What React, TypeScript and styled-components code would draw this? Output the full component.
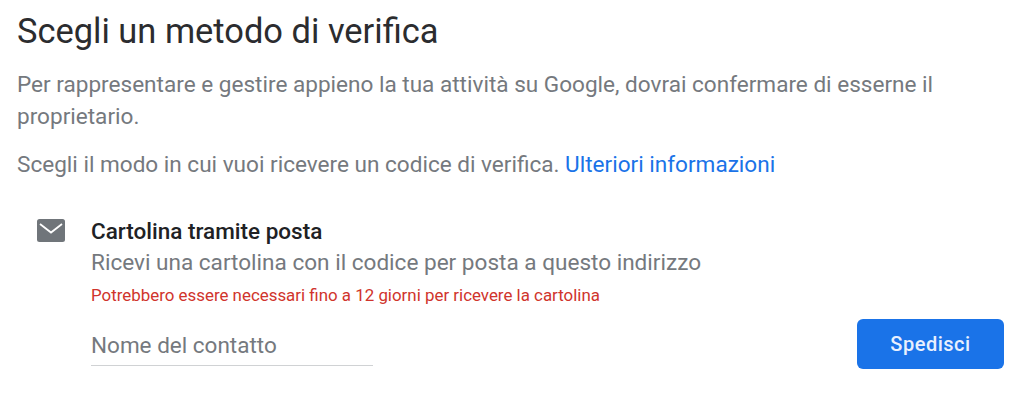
import React from 'react';
import styled, { createGlobalStyle } from 'styled-components';

const GlobalStyle = createGlobalStyle`
    html, body {
        margin: 0;
        background: #fff;
    }
`;

const Page = styled.div`
    width: 1024px;
    height: 410px;
    box-sizing: border-box;
    padding: 10px 20px 0 17px;
    font-family: Roboto, "Liberation Sans", sans-serif;
    overflow: hidden;
`;

const Title = styled.h1`
    margin: 0 0 17px;
    font-size: 34.45px;
    line-height: 42px;
    font-weight: 400;
    color: #2b2c2f;
`;

const Paragraph = styled.p`
    margin: 0 0 16px;
    font-size: 22.57px;
    line-height: 32px;
    color: #75797e;
`;

const Link = styled.a`
    color: #1a73e8;
`;

const Option = styled.div`
    display: flex;
    margin-top: 36px;
    padding-left: 20px;
`;

const IconSlot = styled.div`
    width: 54px;
    flex: none;
    padding-top: 2px;
`;

const Body = styled.div`
    flex: 1;
`;

const OptionTitle = styled.div`
    font-size: 22.5px;
    line-height: 28px;
    font-weight: 500;
    color: #202124;
`;

const OptionText = styled.div`
    font-size: 22.57px;
    line-height: 36px;
    color: #75797e;
`;

const Warning = styled.div`
    font-size: 16.9px;
    line-height: 28px;
    color: #d0342c;
`;

const FormRow = styled.div`
    display: flex;
    justify-content: space-between;
    align-items: flex-start;
    margin-top: 10px;
`;

const ContactInput = styled.div`
    width: 282px;
    margin-top: 12px;
    padding-bottom: 6px;
    font-size: 22.5px;
    line-height: 28px;
    color: #75797e;
    border-bottom: 1px solid #d0d2d4;
`;

const SendButton = styled.button`
    width: 147px;
    height: 50px;
    border: 0;
    border-radius: 6px;
    background: #1a73e8;
    color: #e8f0fe;
    font-family: inherit;
    font-size: 20px;
    font-weight: 500;
    letter-spacing: 0.5px;
`;

export default function App() {
    return (
        <Page>
            <GlobalStyle />
            <Title>Scegli un metodo di verifica</Title>
            <Paragraph>
                Per rappresentare e gestire appieno la tua attività su Google, dovrai confermare di esserne il proprietario.
            </Paragraph>
            <Paragraph>
                Scegli il modo in cui vuoi ricevere un codice di verifica. <Link>Ulteriori informazioni</Link>
            </Paragraph>
            <Option>
                <IconSlot>
                    <svg width="28" height="23" viewBox="0 0 28 23">
                        <rect width="28" height="23" rx="2.5" fill="#70757a" />
                        <path d="M3 5l11 8.5L25 5" fill="none" stroke="#fff" strokeWidth="1.8" />
                    </svg>
                </IconSlot>
                <Body>
                    <OptionTitle>Cartolina tramite posta</OptionTitle>
                    <OptionText>Ricevi una cartolina con il codice per posta a questo indirizzo</OptionText>
                    <Warning>Potrebbero essere necessari fino a 12 giorni per ricevere la cartolina</Warning>
                    <FormRow>
                        <ContactInput>Nome del contatto</ContactInput>
                        <SendButton>Spedisci</SendButton>
                    </FormRow>
                </Body>
            </Option>
        </Page>
    );
}
